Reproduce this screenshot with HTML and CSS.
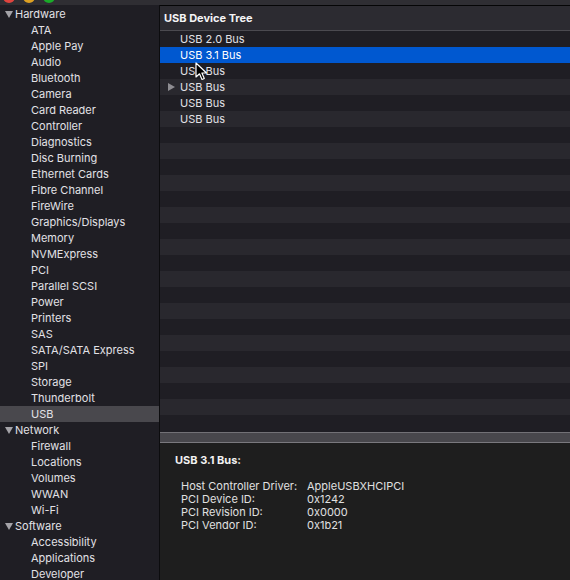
FILE: index.html
```html
<!DOCTYPE html>
<html>
<head>
<meta charset="utf-8">
<link rel="stylesheet" href="styles.css">
</head>
<body>
<div class="window">
  <div class="titlebar">
    <span class="light red"></span><span class="light yellow"></span><span class="light green"></span>
  </div>
  <div class="body">
    <nav class="sidebar">
      <div class="group"><span class="tri-down"></span>Hardware</div>
      <div class="item">ATA</div>
      <div class="item">Apple Pay</div>
      <div class="item">Audio</div>
      <div class="item">Bluetooth</div>
      <div class="item">Camera</div>
      <div class="item">Card Reader</div>
      <div class="item">Controller</div>
      <div class="item">Diagnostics</div>
      <div class="item">Disc Burning</div>
      <div class="item">Ethernet Cards</div>
      <div class="item">Fibre Channel</div>
      <div class="item">FireWire</div>
      <div class="item">Graphics/Displays</div>
      <div class="item">Memory</div>
      <div class="item">NVMExpress</div>
      <div class="item">PCI</div>
      <div class="item">Parallel SCSI</div>
      <div class="item">Power</div>
      <div class="item">Printers</div>
      <div class="item">SAS</div>
      <div class="item">SATA/SATA Express</div>
      <div class="item">SPI</div>
      <div class="item">Storage</div>
      <div class="item">Thunderbolt</div>
      <div class="item selected">USB</div>
      <div class="group"><span class="tri-down"></span>Network</div>
      <div class="item">Firewall</div>
      <div class="item">Locations</div>
      <div class="item">Volumes</div>
      <div class="item">WWAN</div>
      <div class="item">Wi-Fi</div>
      <div class="group"><span class="tri-down"></span>Software</div>
      <div class="item">Accessibility</div>
      <div class="item">Applications</div>
      <div class="item">Developer</div>
    </nav>
    <main class="main">
      <div class="tree-header">USB Device Tree</div>
      <div class="tree">
        <div class="row"><span class="label">USB 2.0 Bus</span></div>
        <div class="row active"><span class="label">USB 3.1 Bus</span></div>
        <div class="row"><span class="label">USB Bus</span></div>
        <div class="row"><span class="tri-right"></span><span class="label">USB Bus</span></div>
        <div class="row"><span class="label">USB Bus</span></div>
        <div class="row"><span class="label">USB Bus</span></div>
        <div class="row"></div><div class="row"></div><div class="row"></div><div class="row"></div>
        <div class="row"></div><div class="row"></div><div class="row"></div><div class="row"></div>
        <div class="row"></div><div class="row"></div><div class="row"></div><div class="row"></div>
        <div class="row"></div><div class="row"></div><div class="row"></div><div class="row"></div>
        <div class="row"></div><div class="row"></div><div class="row"></div>
        <svg class="cursor" width="13" height="19" viewBox="0 0 13 19">
          <path d="M1 1 L1 15 L4.5 11.8 L7 17.5 L9.3 16.5 L6.9 11 L11.5 11 Z" fill="#000" stroke="#fff" stroke-width="1.2" stroke-linejoin="round"/>
        </svg>
      </div>
      <div class="splitter"></div>
      <section class="detail">
        <div class="detail-title">USB 3.1 Bus:</div>
        <div class="props">
          <span>Host Controller Driver:</span><span>AppleUSBXHCIPCI</span>
          <span>PCI Device ID:</span><span>0x1242</span>
          <span>PCI Revision ID:</span><span>0x0000</span>
          <span>PCI Vendor ID:</span><span>0x1b21</span>
        </div>
      </section>
    </main>
  </div>
</div>
</body>
</html>
```
FILE: styles.css
```css
* { box-sizing: border-box; }
html, body { margin: 0; padding: 0; }
body {
  width: 570px;
  height: 580px;
  overflow: hidden;
  background: #1f1e24;
  font-family: Inter, "Liberation Sans", sans-serif;
  font-size: 11px;
  color: #e2e1e6;
}
.window { display: flex; flex-direction: column; height: 580px; }
.titlebar {
  height: 5px;
  flex: none;
  background: #2f2e33;
  display: flex;
  gap: 8px;
  padding-left: 3px;
  overflow: hidden;
}
.light { width: 12px; height: 12px; border-radius: 50%; margin-top: -9px; }
.red { background: #e0443e; }
.yellow { background: #dea123; }
.green { background: #1aab29; }
.body { flex: 1; display: flex; min-height: 0; }
.sidebar {
  width: 160px;
  flex: none;
  background: #1f1e24;
  border-right: 1px solid #0c0c0e;
  padding-top: 1px;
  overflow: hidden;
}
.group, .item {
  height: 16px;
  line-height: 16px;
  white-space: nowrap;
  color: #e2e1e6;
}
.group { display: flex; align-items: center; padding-left: 5px; }
.item { padding-left: 31px; }
.item.selected { background: #49484d; }
.tri-down {
  width: 0; height: 0;
  border-left: 4px solid transparent;
  border-right: 4px solid transparent;
  border-top: 7px solid #a4a3a8;
  margin-right: 2px;
}
.main { flex: 1; display: flex; flex-direction: column; min-width: 0; }
.tree-header {
  height: 26px;
  flex: none;
  border-top: 1px solid #050506;
  border-bottom: 1px solid #4b4a50;
  background: #2c2b31;
  font-weight: 700;
  color: #f4f4f6;
  padding-left: 4px;
  line-height: 25px;
}
.tree { position: relative; height: 401px; flex: none; overflow: hidden; }
.row {
  height: 16px;
  line-height: 16px;
  display: flex;
  align-items: center;
  padding-left: 20px;
  background: #1f1e24;
  color: #e2e1e6;
  position: relative;
}
.row:nth-child(even) { background: #29282e; }
.row.active { background: #0058d0; color: #ffffff; }
.tri-right {
  position: absolute;
  left: 8px;
  top: 4px;
  width: 0; height: 0;
  border-top: 4px solid transparent;
  border-bottom: 4px solid transparent;
  border-left: 7px solid #8e8d92;
}
.cursor { position: absolute; left: 35px; top: 31px; }
.splitter {
  height: 11px;
  flex: none;
  background: #48474c;
  border-top: 1px solid #727176;
  border-bottom: 1px solid #7a797e;
}
.detail {
  flex: 1;
  background: #1e1e1e;
  padding: 10px 0 0 15px;
}
.detail-title { font-weight: 700; color: #f2f2f2; line-height: 14px; }
.props {
  margin-top: 13px;
  margin-left: 6px;
  display: grid;
  grid-template-columns: 126px auto;
  line-height: 13px;
  color: #e0e0e0;
}
```
